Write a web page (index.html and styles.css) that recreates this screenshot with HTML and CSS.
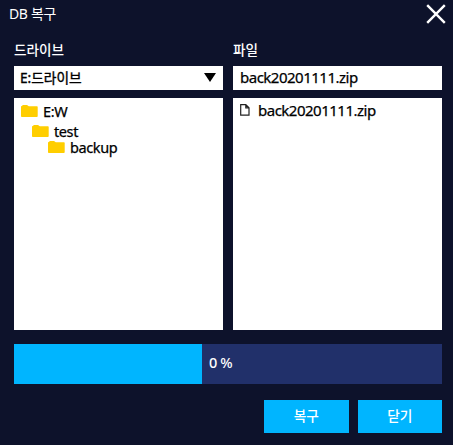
FILE: index.html
```html
<!DOCTYPE html>
<html lang="ko">
<head>
<meta charset="utf-8">
<title>DB 복구</title>
<link rel="stylesheet" href="styles.css">
</head>
<body>
<main class="dialog">
  <header class="titlebar">
    <h1 class="title">DB 복구</h1>
    <svg class="close" viewBox="0 0 20 20"><path d="M1.2 1.2 18.8 18.8M18.8 1.2 1.2 18.8"/></svg>
  </header>
  <div class="columns">
    <section class="column">
      <h2 class="label">드라이브</h2>
      <div class="field select"><span class="drive">E:드라이브</span><svg class="arrow" viewBox="0 0 12 9"><path d="M0 0h12L6 9z"/></svg></div>
      <ul class="list">
        <li class="row root"><svg class="folder" viewBox="0 0 17 12"><path d="M0 1.5Q0 .9.7.9L2 0h4l1.8 1.2H16q.7 0 .7.7V11q0 1-.8 1H.8Q0 12 0 11z"/></svg><span>E:W</span></li>
        <li class="row child"><svg class="folder" viewBox="0 0 17 12"><path d="M0 1.5Q0 .9.7.9L2 0h4l1.8 1.2H16q.7 0 .7.7V11q0 1-.8 1H.8Q0 12 0 11z"/></svg><span>test</span></li>
        <li class="row grandchild"><svg class="folder" viewBox="0 0 17 12"><path d="M0 1.5Q0 .9.7.9L2 0h4l1.8 1.2H16q.7 0 .7.7V11q0 1-.8 1H.8Q0 12 0 11z"/></svg><span>backup</span></li>
      </ul>
    </section>
    <section class="column">
      <h2 class="label">파일</h2>
      <div class="field"><span class="filename">back20201111.zip</span></div>
      <ul class="list">
        <li class="row file"><svg class="page" viewBox="0 0 10 12"><path d="M.7.7h5.1L9 3.8v7.4H.7zM5.8.7v3.1H9"/></svg><span class="filename">back20201111.zip</span></li>
      </ul>
    </section>
  </div>
  <div class="progress"><div class="fill"></div><span class="percent">0 %</span></div>
  <footer class="actions">
    <button class="button">복구</button>
    <button class="button">닫기</button>
  </footer>
</main>
</body>
</html>
```
FILE: styles.css
```css
* { box-sizing: border-box; margin: 0; padding: 0; }

body {
  background: #0d122b;
  color: #fff;
  font: 14px/20px "Noto Sans", "Noto Sans CJK KR", sans-serif;
}

.dialog {
  width: 453px;
  height: 445px;
  overflow: hidden;
  padding-left: 14px;
}

.titlebar {
  display: flex;
  justify-content: space-between;
  height: 40px;
  padding: 4px 7px 0 0;
  margin-left: -5px;
}

.title {
  font-size: 14px;
  font-weight: 400;
  letter-spacing: -.35px;
}

.close {
  width: 20px;
  height: 20px;
  fill: none;
  stroke: #fff;
  stroke-width: 2.4;
}

.columns {
  display: grid;
  grid-template-columns: 209px 209px;
  gap: 10px;
}

.label {
  height: 25.5px;
  font-size: 13.6px;
  font-weight: 500;
}

.field {
  display: flex;
  align-items: center;
  height: 24px;
  padding: 0 0 1px 7px;
  background: #fff;
  color: #000;
}

.select {
  justify-content: space-between;
  padding: 0 7.5px 0 6px;
}

.drive { font-size: 13.7px; -webkit-text-stroke: .35px; }

.arrow { width: 12px; height: 9px; }

.list {
  height: 232px;
  margin-top: 8.5px;
  padding-top: 3px;
  background: #fff;
  color: #000;
  list-style: none;
}

.row {
  display: flex;
  align-items: center;
  gap: 5px;
  height: 20px;
  font-size: 14.5px;
  letter-spacing: -.4px;
  -webkit-text-stroke: .25px;
}

.root { padding-left: 7px; }
.child { padding-left: 18px; height: 19px; }
.grandchild { padding-left: 34px; height: 14px; }
.file { gap: 8px; padding-left: 7px; height: 17px; }

.folder { width: 17px; height: 12px; fill: #ffce00; }

.page {
  width: 10px;
  height: 12px;
  fill: none;
  stroke: #222;
  stroke-width: 1.2;
}

.filename {
  font-size: 15px;
  letter-spacing: -.5px;
  -webkit-text-stroke: .25px;
}

.progress {
  display: flex;
  width: 428px;
  height: 40px;
  margin-top: 13.5px;
  background: #21306a;
}

.fill { width: 188px; background: #00b5ff; }

.percent {
  padding: 8px 0 0 7px;
  font-size: 14.5px;
  font-weight: 500;
  letter-spacing: -.4px;
}

.actions {
  display: flex;
  justify-content: flex-end;
  gap: 9px;
  margin-top: 16.5px;
  padding-right: 11px;
}

.button {
  width: 84.5px;
  height: 32.5px;
  padding-bottom: 1px;
  border: 0;
  background: #00b5ff;
  color: #fff;
  font: 500 13.7px/20px "Noto Sans", "Noto Sans CJK KR", sans-serif;
}
```
